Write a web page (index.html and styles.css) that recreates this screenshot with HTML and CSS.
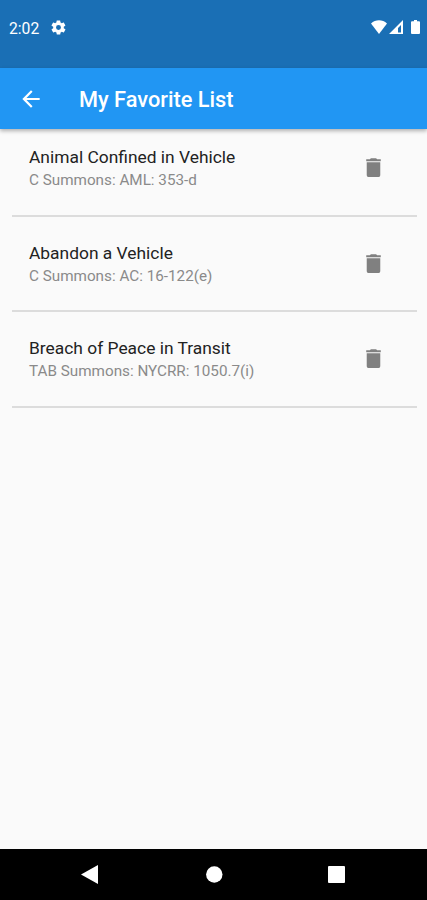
FILE: index.html
```
<!DOCTYPE html>
<html lang="en">
<head>
<meta charset="utf-8">
<title>My Favorite List</title>
<link rel="stylesheet" href="styles.css">
</head>
<body>
<div class="status">
  <span class="time">2:02</span>
  <svg class="gear" viewBox="0 0 24 24"><path d="M19.4 13c0-.3.1-.6.1-1s0-.7-.1-1l2.100-1.600c.2-.2.2-.4.100-.600l-2-3.500c-.100-.200-.400-.300-.600-.200l-2.500 1c-.500-.400-1.100-.700-1.700-1l-.400-2.600c0-.300-.200-.500-.500-.500h-4c-.300 0-.500.200-.500.400L9 5.100c-.6.200-1.200.6-1.700 1l-2.500-1c-.2-.1-.5 0-.6.200l-2 3.500c-.1.200-.1.500.1.600L4.500 11v2l-2.100 1.600c-.2.200-.3.400-.1.600l2 3.500c.1.200.4.300.6.200l2.500-1c.5.400 1.100.7 1.700 1l.4 2.600c0 .3.200.5.500.5h4c.3 0 .5-.2.500-.4l.4-2.700c.6-.2 1.200-.6 1.700-1l2.500 1c.2.100.5 0 .6-.2l2-3.500c.1-.2.100-.5-.1-.6L19.400 13zM12 15.500a3.500 3.500 0 1 1 0-7 3.500 3.500 0 0 1 0 7z"/></svg>
  <div class="system">
    <svg class="wifi" viewBox="0 0 16 14"><path d="M8 14 0 3.500C4.500-.7 11.500-.7 16 3.500z"/></svg>
    <svg class="signal" viewBox="0 0 14 14"><path d="M0 14 14 0v14zM9 12.500h3V5L9 8z" fill-rule="evenodd"/></svg>
    <svg class="battery" viewBox="0 0 9 14"><path d="M3 0h3v1.200h2q1 0 1 1V13q0 1-1 1H1q-1 0-1-1V2.200q0-1 1-1h2z"/></svg>
  </div>
</div>
<header class="appbar">
  <svg class="back" viewBox="0 0 24 24"><path d="M20 11H7.830l5.590-5.590L12 4l-8 8 8 8 1.410-1.410L7.830 13H20z"/></svg>
  <h1>My Favorite List</h1>
</header>
<main class="list">
  <div class="row"><div class="text"><div class="name">Animal Confined in Vehicle</div><div class="code">C Summons: AML: 353-d</div></div><svg class="trash" viewBox="0 0 24 24"><path d="M5.500 19.500q0 1.500 1.500 1.500h10q1.500 0 1.500-1.500V7h-13zM19 4h-3.500l-1-1h-5l-1 1H5v2h14z"/></svg></div>
  <div class="row"><div class="text"><div class="name">Abandon a Vehicle</div><div class="code">C Summons: AC: 16-122(e)</div></div><svg class="trash" viewBox="0 0 24 24"><path d="M5.500 19.500q0 1.500 1.500 1.500h10q1.500 0 1.500-1.500V7h-13zM19 4h-3.500l-1-1h-5l-1 1H5v2h14z"/></svg></div>
  <div class="row"><div class="text"><div class="name">Breach of Peace in Transit</div><div class="code">TAB Summons: NYCRR: 1050.7(i)</div></div><svg class="trash" viewBox="0 0 24 24"><path d="M5.500 19.500q0 1.500 1.500 1.500h10q1.500 0 1.500-1.500V7h-13zM19 4h-3.500l-1-1h-5l-1 1H5v2h14z"/></svg></div>
</main>
<nav class="navbar">
  <svg viewBox="0 0 20 20"><path d="M1 9.500 18 0v19z"/></svg>
  <svg viewBox="0 0 20 20"><circle cx="10.300" cy="9.500" r="8.200"/></svg>
  <svg viewBox="0 0 20 20"><rect x="1" y="1" width="17" height="17" rx="1"/></svg>
</nav>
</body>
</html>
```
FILE: styles.css
```
* { box-sizing: border-box; }
body { margin: 0; height: 900px; display: flex; flex-direction: column; background: #fafafa; font-family: Roboto, sans-serif; overflow: hidden; }
svg { display: block; flex: none; fill: #fff; }
.status { height: 68px; background: #1a6fb5; color: #fff; display: flex; align-items: flex-start; padding: 18px 7px 0 9px; }
.time { font-size: 15.700px; line-height: 21px; width: 41px; }
.gear { width: 17px; height: 17px; margin-top: 1px; }
.system { margin-left: auto; display: flex; gap: 2px; padding-top: 2px; }
.wifi { width: 16px; height: 14px; }
.signal { width: 14px; height: 14px; }
.battery { width: 9px; height: 14px; margin-left: 6px; }
.appbar { height: 61px; background: #2196f3; display: flex; align-items: center; padding-left: 18px; box-shadow: 0 2px 4px rgba(0,0,0,.3); position: relative; }
.back { width: 26px; height: 26px; }
h1 { margin: 1px 0 0 35px; font-size: 21.750px; line-height: 29px; font-weight: 500; color: #fff; white-space: nowrap; }
.list { flex: 1; padding: 0 10px 0 12px; margin-top: -8px; }
.row { height: 95.500px; border-bottom: 2px solid #dcdcdc; display: flex; justify-content: space-between; padding: 25px 31px 0 17px; }
.name { font-size: 17.400px; line-height: 23px; color: #222; white-space: nowrap; }
.code { font-size: 15.250px; line-height: 23px; color: #8a8a8a; white-space: nowrap; }
.trash { width: 25px; height: 25px; margin-top: 9px; fill: #808080; }
.navbar { height: 51px; background: #000; display: flex; justify-content: space-between; align-items: center; padding: 0 80px; }
.navbar svg { width: 20px; height: 20px; }
```
